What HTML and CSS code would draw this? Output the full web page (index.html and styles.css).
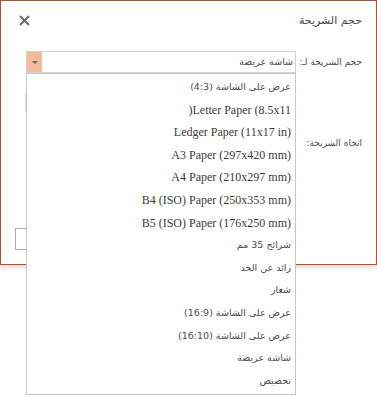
FILE: index.html
```html
<!DOCTYPE html>
<html lang="ar" dir="rtl">
<head>
<meta charset="utf-8">
<title>حجم الشريحة</title>
<link rel="stylesheet" href="styles.css">
</head>
<body>
<div class="dialog">
  <div class="header">
    <h1 class="title">حجم الشريحة</h1>
    <button class="close" aria-label="إغلاق">
      <svg width="11" height="11" viewBox="0 0 11 11"><path d="M1 1L10 10M10 1L1 10" stroke="#6b6b6b" stroke-width="2" fill="none"/></svg>
    </button>
  </div>
  <div class="row size-row">
    <label class="label">حجم الشريحة لـ:</label>
    <div class="combo">
      <span class="combo-text">شاشة عريضة</span>
      <span class="combo-btn"><span class="arrow"></span></span>
      <ul class="list">
        <li class="ar">عرض على الشاشة (4:3)</li>
        <li class="en" dir="ltr">)Letter Paper (8.5x11</li>
        <li class="en" dir="ltr">Ledger Paper (11x17 in)</li>
        <li class="en" dir="ltr">A3 Paper (297x420 mm)</li>
        <li class="en" dir="ltr">A4 Paper (210x297 mm)</li>
        <li class="en" dir="ltr">B4 (ISO) Paper (250x353 mm)</li>
        <li class="en" dir="ltr">B5 (ISO) Paper (176x250 mm)</li>
        <li class="ar">شرائح 35 مم</li>
        <li class="ar">زائد عن الحد</li>
        <li class="ar">شعار</li>
        <li class="ar">عرض على الشاشة (16:9)</li>
        <li class="ar">عرض على الشاشة (16:10)</li>
        <li class="ar">شاشة عريضة</li>
        <li class="ar">تخصيص</li>
      </ul>
    </div>
  </div>
  <div class="row orient-row">
    <label class="label orient-label">اتجاه الشريحة:</label>
    <div class="orient-ctl"></div>
  </div>
  <div class="footer">
    <button class="btn"></button>
  </div>
</div>
</body>
</html>
```
FILE: styles.css
```css
html, body {
  margin: 0;
  padding: 0;
  background: #ffffff;
}
body {
  width: 377px;
  height: 397px;
  overflow: hidden;
  font-family: "DejaVu Sans", sans-serif;
  color: #444444;
}
.dialog {
  box-sizing: border-box;
  width: 377px;
  height: 265px;
  border: 1px solid #c4462b;
  background: #ffffff;
  box-shadow: 0 3px 4px rgba(140, 80, 60, 0.22);
  display: flex;
  flex-direction: column;
}
.header {
  display: flex;
  justify-content: space-between;
  align-items: center;
  padding: 9px 14px 0 18px;
  height: 21px;
}
.title {
  margin: 0;
  font-size: 11px;
  font-weight: normal;
  line-height: 20px;
  color: #444444;
  white-space: nowrap;
}
.close {
  border: 0;
  background: none;
  padding: 0;
  width: 11px;
  height: 11px;
  display: flex;
  margin-top: -1px;
}
.row {
  display: flex;
  align-items: center;
  padding: 0 14px 0 25px;
}
.size-row {
  margin-top: 20px;
  justify-content: space-between;
}
.label {
  font-size: 9px;
  line-height: 20px;
  color: #4a4a4a;
  white-space: nowrap;
}
.combo {
  position: relative;
  box-sizing: border-box;
  width: 270px;
  height: 22px;
  border: 1px solid #d2d2d2;
  display: flex;
  align-items: center;
  justify-content: space-between;
}
.combo-text {
  font-size: 9.5px;
  padding-right: 2px;
  line-height: 20px;
  color: #4a4a4a;
  white-space: nowrap;
}
.combo-btn {
  width: 15px;
  height: 20px;
  background: #f5b99c;
  display: flex;
  align-items: center;
  justify-content: center;
}
.arrow {
  width: 0;
  height: 0;
  border-left: 3px solid transparent;
  border-right: 3px solid transparent;
  border-top: 3px solid #6a6a6a;
  margin-top: 1px;
}
.list {
  position: absolute;
  top: 21px;
  left: -1px;
  box-sizing: border-box;
  width: 270px;
  height: 322px;
  margin: 0;
  padding: 2px 4px 0 4px;
  list-style: none;
  background: #ffffff;
  border: 1px solid #c6c6c6;
  z-index: 5;
}
.list li {
  height: 22.6px;
  line-height: 22.6px;
  text-align: right;
  white-space: nowrap;
  color: #444444;
}
.list .en {
  font-family: "Liberation Serif", serif;
  font-size: 12px;
  color: #3a3a3a;
}
.list .ar {
  font-family: "DejaVu Sans", sans-serif;
  font-size: 9.5px;
  color: #4a4a4a;
}
.orient-row {
  margin-top: 20px;
  justify-content: space-between;
  align-items: flex-start;
  padding-left: 24px;
}
.orient-label {
  margin-top: 40px;
}
.orient-ctl {
  box-sizing: border-box;
  width: 100px;
  height: 18px;
  border: 1px solid #dcdcdc;
}
.footer {
  margin-top: auto;
  padding: 0 0 14px 14px;
  display: flex;
  justify-content: flex-end;
}
.btn {
  box-sizing: border-box;
  width: 80px;
  height: 22px;
  border: 1px solid #ababab;
  background: #ffffff;
  padding: 0;
}
```
